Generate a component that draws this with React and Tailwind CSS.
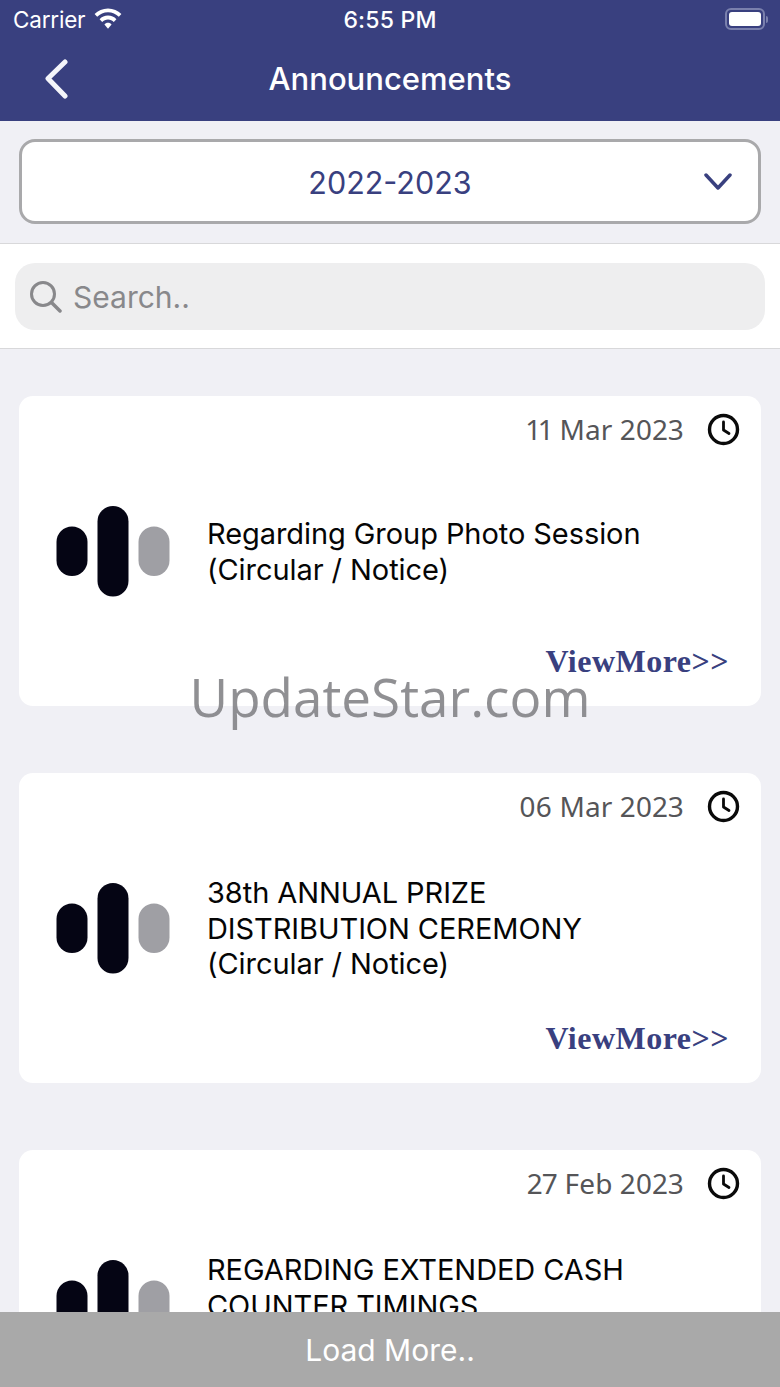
import React from "react";

const sans = "font-['Inter','Liberation_Sans',sans-serif]";

function Logo() {
  return (
    <svg width="114" height="92" viewBox="0 0 114 92" className="shrink-0 block">
      <rect x="0.5" y="20.500" width="31" height="49.500" rx="15.500" fill="#050514" />
      <rect x="41.5" y="0" width="31" height="90.500" rx="15.500" fill="#050514" />
      <rect x="82.5" y="20.500" width="31" height="49.500" rx="15.500" fill="#9f9fa4" />
    </svg>
  );
}

function Clock() {
  return (
    <svg width="33" height="33" viewBox="0 0 33 33" fill="none" stroke="#0a0a0a" strokeWidth="3.400" strokeLinecap="round" strokeLinejoin="round" className="block mb-[2px]">
      <circle cx="16.500" cy="16.500" r="14" />
      <path d="M16.500 9V17L22 20.500" strokeWidth="2.800" />
    </svg>
  );
}

function Card({ date, lines }) {
  return (
    <div className="mx-[19px] h-[310px] shrink-0 rounded-[14px] bg-white relative flex flex-col">
      <div className="flex items-center justify-end h-[68px] pr-[21px] gap-[23px]">
        <span className="font-['Noto_Sans',sans-serif] text-[28px] leading-[34px] text-[#555558] [font-variant-numeric:proportional-nums] tracking-[0.15px] mb-[2px]">{date}</span>
        <Clock />
      </div>
      <div className="flex items-center h-[175px] pl-[37px] gap-[37px]">
        <Logo />
        <div className={`${sans} text-[29px] leading-[35.700px] text-[#050505] tracking-[-0.07px]`}>
          {lines.map((l) => (
            <div key={l} className="whitespace-nowrap">{l}</div>
          ))}
        </div>
      </div>
      <div className="flex justify-end pr-[32px] pt-[4px]">
        <span className="font-['Liberation_Serif',serif] font-bold text-[32px] leading-[36px] text-[#39407f] tracking-[0.5px]">ViewMore&gt;&gt;</span>
      </div>
    </div>
  );
}

export default function App() {
  return (
    <div className={`${sans} relative w-[780px] h-[1387px] overflow-hidden bg-[#f0f0f5] flex flex-col`}>
      {/* Header */}
      <header className="h-[121px] shrink-0 bg-[#39407f] text-white flex flex-col">
        <div className="h-[40px] relative flex items-center justify-center">
          <div className="absolute left-[13px] top-[6px] flex items-center gap-[9px]">
            <span className="text-[22.500px] leading-[28px] tracking-[-0.2px]">Carrier</span>
            <svg width="28" height="22" viewBox="0 0 29 22" fill="white" className="mb-[3px]">
              <path d="M14.500 0C9 0 4.200 2.200 .6 5.800l2.700 2.900C6.200 5.800 10.100 4 14.500 4s8.300 1.800 11.200 4.700l2.700-2.900C24.800 2.200 20 0 14.500 0z" />
              <path d="M14.500 7.500c-3.400 0-6.500 1.400-8.700 3.700l2.700 2.900c1.500-1.600 3.600-2.600 6-2.600s4.500 1 6 2.600l2.700-2.900c-2.200-2.300-5.300-3.700-8.700-3.700z" />
              <path d="M14.500 15c-1.500 0-2.800.6-3.700 1.600l3.700 4.400 3.700-4.400c-.9-1-2.200-1.600-3.700-1.600z" />
            </svg>
          </div>
          <span className="text-[23px] leading-[28px] font-medium tracking-[0.2px]">6:55 PM</span>
          <div className="absolute left-[725px] top-[8px] flex items-center gap-[1px]">
            <div className="w-[40px] h-[22px] rounded-[6px] border-2 border-[#7a80ad] p-[2px]">
              <div className="w-full h-full bg-white rounded-[3px]" />
            </div>
            <div className="w-[2px] h-[7px] bg-[#7a80ad] rounded-r-sm" />
          </div>
        </div>
        <div className="flex-1 relative flex items-center justify-center pb-[3px]">
          <svg width="26" height="40" viewBox="0 0 26 40" fill="none" stroke="#f4f5fa" strokeWidth="5" strokeLinecap="round" strokeLinejoin="round" className="absolute left-[44px] top-[19px]">
            <path d="M21 3L4 19.500L21 37" />
          </svg>
          <span className="text-[31px] leading-[36px] font-medium tracking-[0px]">Announcements</span>
        </div>
      </header>

      {/* Year select */}
      <div className="h-[123px] shrink-0 bg-[#f0f0f5] border-b border-[#d8d8da] px-[19px] pt-[18px]">
        <div className="h-[85px] rounded-[16px] border-[3px] border-[#a9a9ab] bg-white relative flex items-center justify-center">
          <span className="text-[30.500px] leading-[40px] text-[#39407f] pt-[2px]">2022-2023</span>
          <svg width="30" height="18" viewBox="0 0 30 18" fill="none" stroke="#39407f" strokeWidth="3.500" strokeLinecap="round" strokeLinejoin="round" className="absolute right-[25px] top-[31px]">
            <path d="M3 2L15 15L27 2" />
          </svg>
        </div>
      </div>

      {/* Search */}
      <div className="h-[105px] shrink-0 bg-white border-b border-[#d8d8da] px-[15px] pt-[19px]">
        <div className="h-[67px] rounded-[20px] bg-[#eeeeef] flex items-center pl-[14px] gap-[11px]">
          <svg width="33" height="33" viewBox="0 0 33 33" fill="none" stroke="#88888b" strokeWidth="3" strokeLinecap="round">
            <circle cx="14" cy="14" r="11.500" />
            <path d="M22.500 22.500L31 31" strokeWidth="3.500" />
          </svg>
          <span className="text-[30px] leading-[40px] text-[#88888b]">Search..</span>
        </div>
      </div>

      {/* List */}
      <div className="flex-1 min-h-0 overflow-hidden pt-[47px] flex flex-col gap-[67px]">
        <Card date="11 Mar 2023" lines={["Regarding Group Photo Session", "(Circular / Notice)"]} />
        <Card date="06 Mar 2023" lines={["38th ANNUAL PRIZE", "DISTRIBUTION CEREMONY", "(Circular / Notice)"]} />
        <Card date="27 Feb 2023" lines={["REGARDING EXTENDED CASH", "COUNTER TIMINGS", "(Circular / Notice)"]} />
      </div>

      {/* Load more */}
      <div className="h-[75px] shrink-0 bg-[#a9a9a9] flex items-center justify-center">
        <span className="text-[30px] leading-[40px] text-white">Load More..</span>
      </div>

      {/* Watermark */}
      <div className="absolute left-0 right-0 top-[658px] text-center font-['Open_Sans',sans-serif] font-normal text-[53px] leading-[78px] text-[#7d7d80]/85 pointer-events-none">
        UpdateStar.com
      </div>
    </div>
  );
}
